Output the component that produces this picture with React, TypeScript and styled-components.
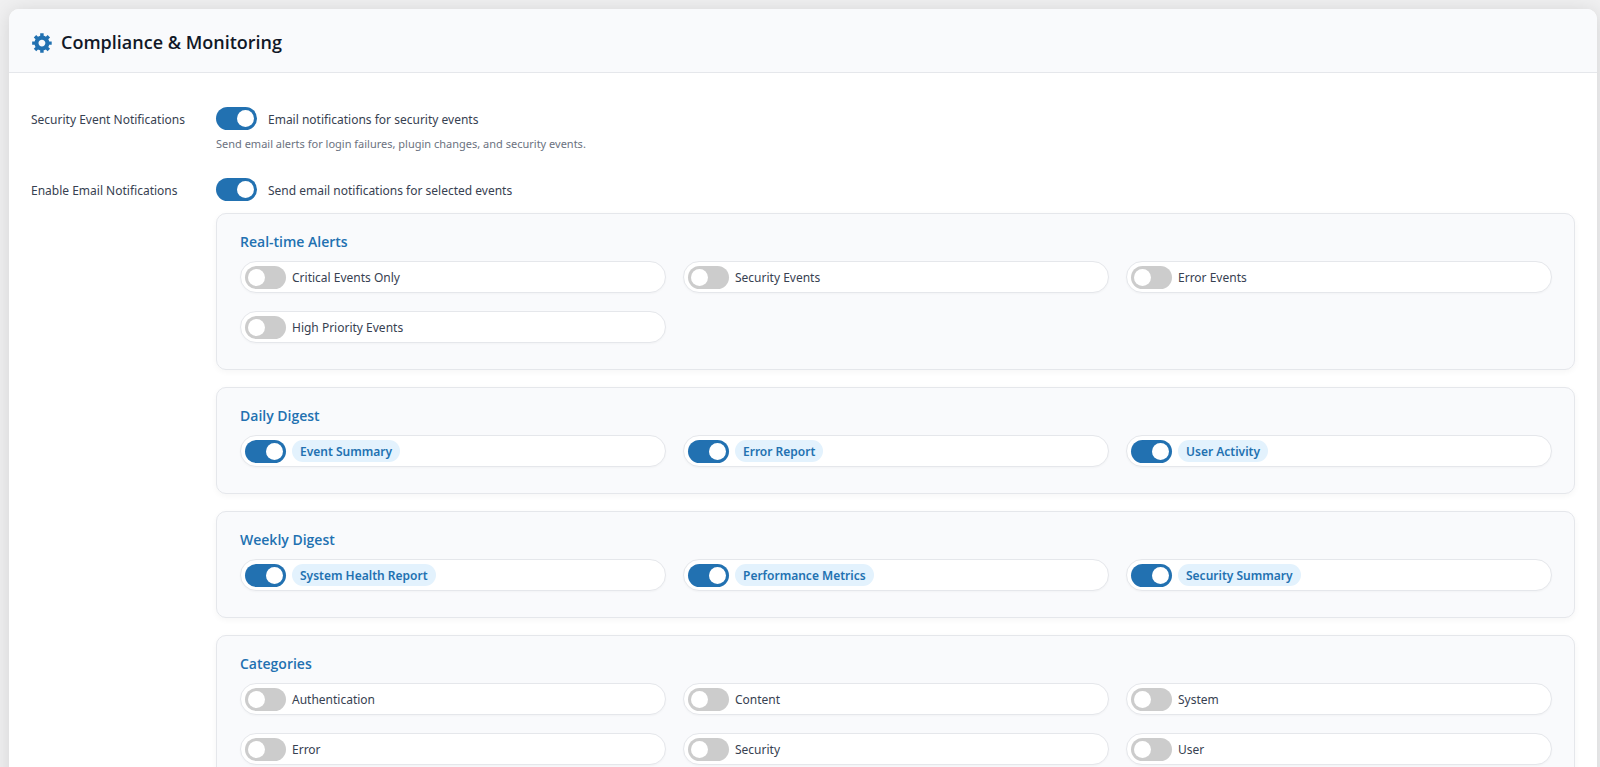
import React, { useId, useState } from 'react';
import styled, { createGlobalStyle } from 'styled-components';

const colors = {
  accent: '#2271b1',
  badge: '#e3f2fd',
  border: '#e5e7eb',
  surface: '#f9fafc',
  title: '#111827',
  text: '#374151',
  muted: '#6b7280',
  off: '#cccccc',
};

const GlobalStyle = createGlobalStyle`
  *, *::before, *::after { box-sizing: border-box; }
  body {
    margin: 0;
    background: #f0f0f1;
    color: ${colors.text};
    font: 400 12px/20px 'Noto Sans', 'Open Sans', sans-serif;
  }
`;

const Page = styled.main`
  padding: 9px 3px 0 9px;
  overflow: hidden;
`;

const Panel = styled.section`
  background: #fff;
  border-radius: 10px;
  box-shadow: 0 2px 20px rgba(0, 0, 0, 0.12);
`;

const PanelHeader = styled.header`
  display: flex;
  align-items: center;
  gap: 7px;
  height: 64px;
  padding: 4px 22px 0;
  background: ${colors.surface};
  border-bottom: 1px solid ${colors.border};
  border-radius: 10px 10px 0 0;
`;

const PanelTitle = styled.h2`
  margin: 0;
  padding-bottom: 2px;
  color: ${colors.title};
  font-family: 'Open Sans', sans-serif;
  font-size: 18px;
  line-height: 24px;
  font-weight: 600;
`;

const PanelBody = styled.div`
  display: flex;
  flex-direction: column;
  gap: 24px;
  padding: 34px 22px 24px;
`;

const SettingRow = styled.div`
  display: grid;
  grid-template-columns: 185px 1fr;
`;

const SettingName = styled.div`
  padding-top: 3px;
`;

const SwitchLine = styled.div`
  display: flex;
  gap: 11px;
`;

const SwitchLabel = styled.label`
  padding-top: 3px;
  cursor: pointer;
`;

const Hint = styled.p`
  margin: 4px 0 0;
  color: ${colors.muted};
  font-size: 11px;
  line-height: 20px;
`;

const Switch = styled.input`
  appearance: none;
  flex: none;
  display: flex;
  width: 41px;
  height: 23px;
  margin: 0;
  padding: 3px;
  border-radius: 12px;
  background: ${colors.off};
  cursor: pointer;

  &::before {
    content: '';
    width: 17px;
    height: 17px;
    border-radius: 50%;
    background: #fff;
  }

  &:checked {
    justify-content: flex-end;
    background: ${colors.accent};
  }
`;

const Groups = styled.div`
  display: flex;
  flex-direction: column;
  gap: 17px;
  margin-top: 12px;
`;

const Group = styled.fieldset`
  min-width: 0;
  margin: 0;
  padding: 18px 22px 26px 23px;
  border: 1px solid ${colors.border};
  border-radius: 10px;
  background: ${colors.surface};
  box-shadow: 0 2px 6px rgba(0, 0, 0, 0.04);
`;

const GroupTitle = styled.h3`
  margin: 0 0 9px;
  color: ${colors.accent};
  font-family: 'Open Sans', sans-serif;
  font-size: 14px;
  line-height: 20px;
  font-weight: 600;
`;

const Options = styled.div`
  display: grid;
  grid-template-columns: repeat(3, 1fr);
  gap: 18px 17px;
`;

const Option = styled.div`
  display: flex;
  align-items: center;
  gap: 6px;
  height: 32px;
  padding: 0 4px;
  border: 1px solid ${colors.border};
  border-radius: 16px;
  background: #fff;
  box-shadow: 0 1px 2px rgba(0, 0, 0, 0.03);
`;

const OptionLabel = styled.label<{ $on: boolean }>`
  padding: ${(p) => (p.$on ? '2px 8px 0' : '2px 0 0')};
  border-radius: 11px;
  background: ${(p) => (p.$on ? colors.badge : 'transparent')};
  color: ${(p) => (p.$on ? colors.accent : colors.text)};
  font-weight: ${(p) => (p.$on ? 600 : 400)};
  cursor: pointer;
`;

function GearIcon() {
  return (
    <svg width="23" height="23" viewBox="0 0 20 20" fill={colors.accent} aria-hidden="true">
      <path d="M18 12h-2.18c-.17.7-.44 1.35-.81 1.93l1.54 1.54-2.1 2.1-1.54-1.54c-.58.36-1.23.63-1.91.79V19H8v-2.18c-.68-.16-1.33-.43-1.91-.79l-1.54 1.54-2.12-2.12 1.54-1.54c-.36-.58-.63-1.23-.79-1.91H1V9.03h2.17c.16-.7.44-1.35.8-1.94L2.43 5.55l2.1-2.1 1.54 1.54c.58-.37 1.24-.64 1.93-.81V2h3v2.18c.68.16 1.33.43 1.91.79l1.54-1.54 2.12 2.12-1.54 1.54c.36.59.64 1.24.8 1.94H18V12zm-8.5 1.5c1.66 0 3-1.34 3-3s-1.34-3-3-3-3 1.34-3 3 1.34 3 3 3z" />
    </svg>
  );
}

function MainSwitch({ label }: { label: string }) {
  const id = useId();
  return (
    <SwitchLine>
      <Switch id={id} type="checkbox" defaultChecked />
      <SwitchLabel htmlFor={id}>{label}</SwitchLabel>
    </SwitchLine>
  );
}

function OptionSwitch({ label, initial }: { label: string; initial: boolean }) {
  const id = useId();
  const [on, setOn] = useState(initial);
  return (
    <Option>
      <Switch id={id} type="checkbox" checked={on} onChange={(e) => setOn(e.target.checked)} />
      <OptionLabel htmlFor={id} $on={on}>
        {label}
      </OptionLabel>
    </Option>
  );
}

const groups = [
  {
    title: 'Real-time Alerts',
    on: false,
    options: ['Critical Events Only', 'Security Events', 'Error Events', 'High Priority Events'],
  },
  { title: 'Daily Digest', on: true, options: ['Event Summary', 'Error Report', 'User Activity'] },
  {
    title: 'Weekly Digest',
    on: true,
    options: ['System Health Report', 'Performance Metrics', 'Security Summary'],
  },
  {
    title: 'Categories',
    on: false,
    options: ['Authentication', 'Content', 'System', 'Error', 'Security', 'User'],
  },
];

export default function App() {
  return (
    <>
      <GlobalStyle />
      <Page>
        <Panel>
          <PanelHeader>
            <GearIcon />
            <PanelTitle>Compliance &amp; Monitoring</PanelTitle>
          </PanelHeader>
          <PanelBody>
            <SettingRow>
              <SettingName>Security Event Notifications</SettingName>
              <div>
                <MainSwitch label="Email notifications for security events" />
                <Hint>Send email alerts for login failures, plugin changes, and security events.</Hint>
              </div>
            </SettingRow>
            <SettingRow>
              <SettingName>Enable Email Notifications</SettingName>
              <div>
                <MainSwitch label="Send email notifications for selected events" />
                <Groups>
                  {groups.map((group) => (
                    <Group key={group.title} aria-label={group.title}>
                      <GroupTitle>{group.title}</GroupTitle>
                      <Options>
                        {group.options.map((option) => (
                          <OptionSwitch key={option} label={option} initial={group.on} />
                        ))}
                      </Options>
                    </Group>
                  ))}
                </Groups>
              </div>
            </SettingRow>
          </PanelBody>
        </Panel>
      </Page>
    </>
  );
}
